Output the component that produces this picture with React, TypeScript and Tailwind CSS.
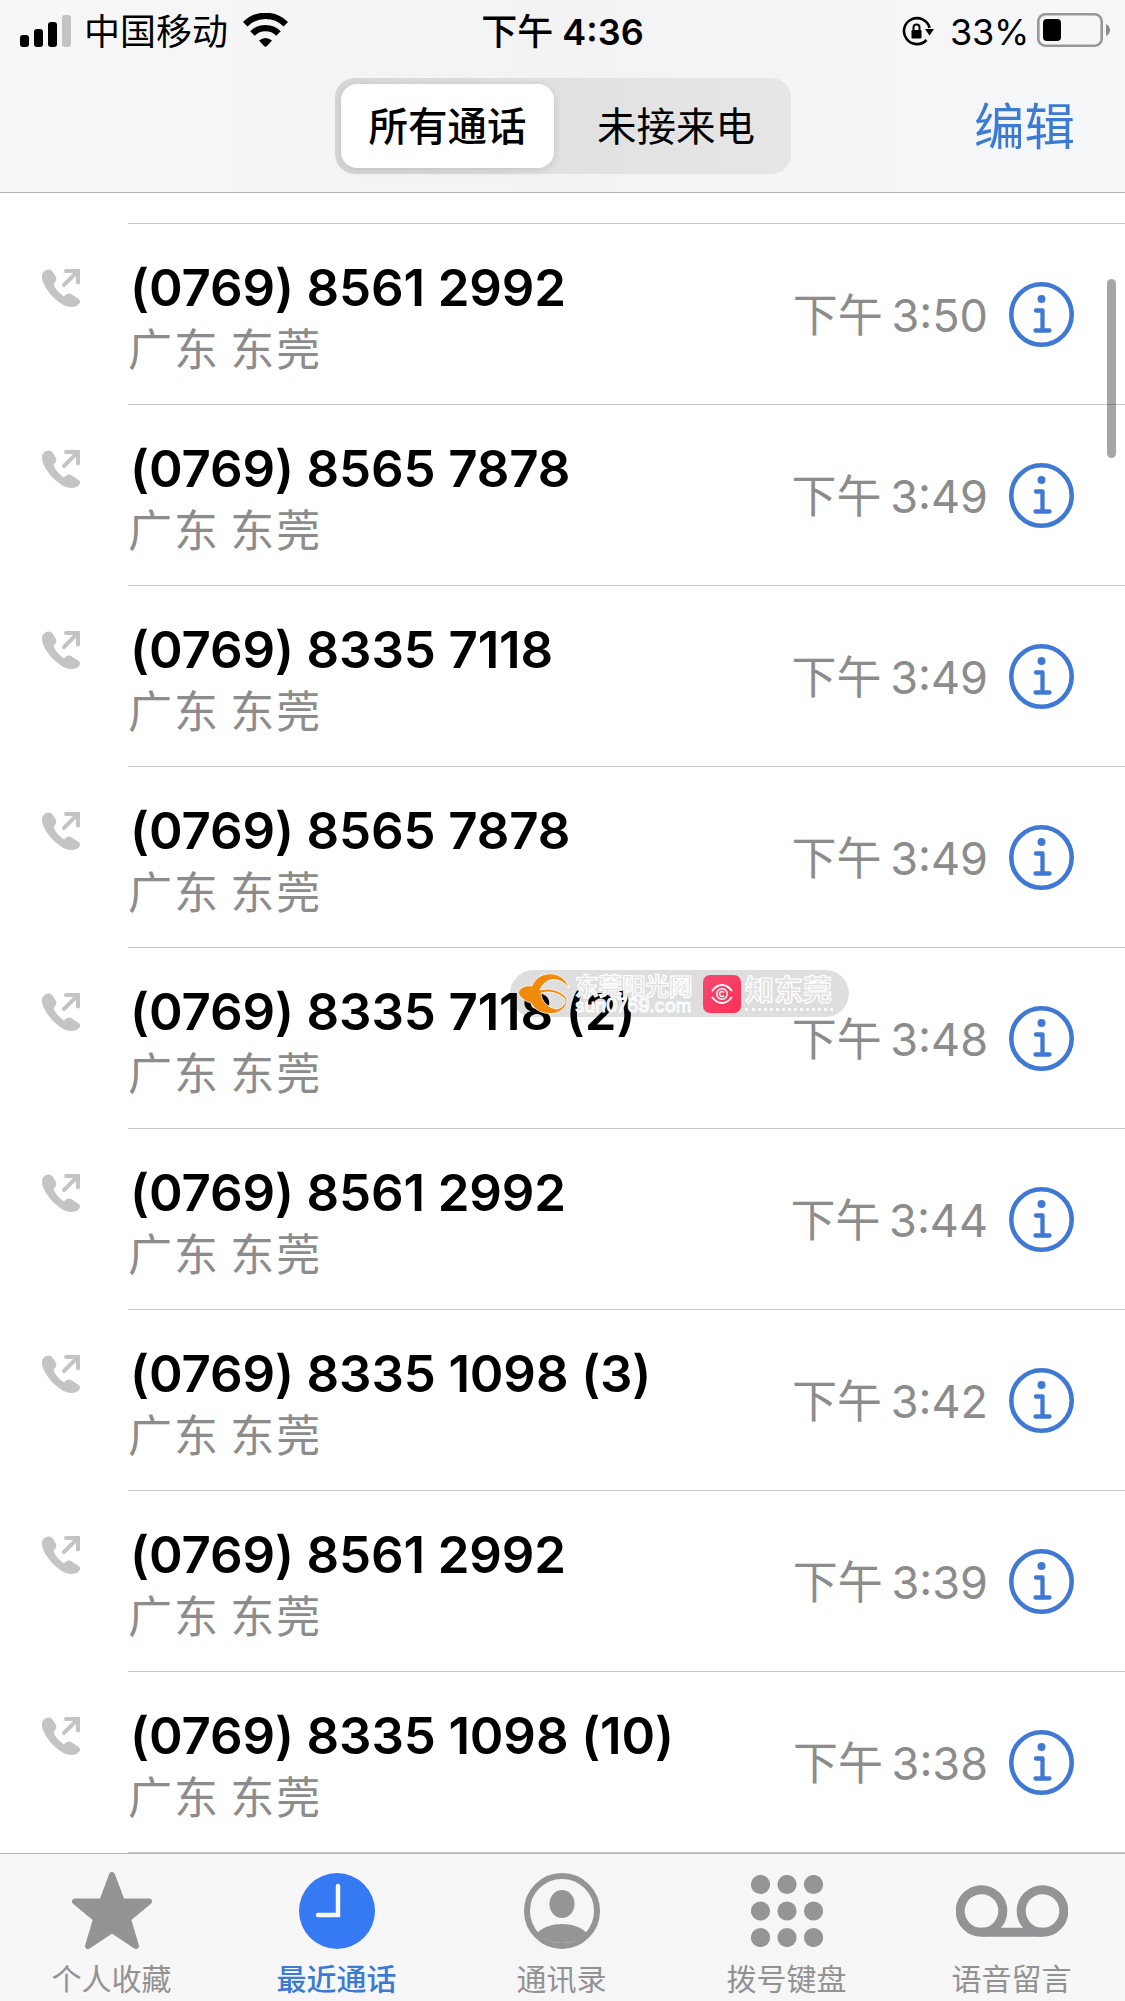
const calls = [
  { number: "(0769) 8561 2992", time: "3:50" },
  { number: "(0769) 8565 7878", time: "3:49" },
  { number: "(0769) 8335 7118", time: "3:49" },
  { number: "(0769) 8565 7878", time: "3:49" },
  { number: "(0769) 8335 7118 (2)", time: "3:48" },
  { number: "(0769) 8561 2992", time: "3:44" },
  { number: "(0769) 8335 1098 (3)", time: "3:42" },
  { number: "(0769) 8561 2992", time: "3:39" },
  { number: "(0769) 8335 1098 (10)", time: "3:38" },
];

function StatusBar() {
  return (
    <div className="grid h-[62px] grid-cols-[1fr_auto_1fr] items-center text-[36px] leading-none text-black">
      <div className="flex items-center pl-5">
        <svg width="51" height="32" viewBox="0 0 51 32">
          <rect x="0" y="20" width="9" height="12" rx="3" />
          <rect x="14" y="14" width="9" height="18" rx="3" />
          <rect x="28" y="7" width="9" height="25" rx="3" />
          <rect x="42" y="0" width="9" height="32" rx="3" fill="#c4c4c4" />
        </svg>
        <span className="ml-[13px] pt-[1px]">中国移动</span>
        <svg className="-mt-[3px] ml-[15px]" width="45" height="34" viewBox="0 0 45 34">
          <g fill="none" stroke="#000" strokeWidth="6.4">
            <path d="M2.2 11.2A29 29 0 0 1 42.8 11.2" />
            <path d="M9.5 20.5A18.5 18.5 0 0 1 35.5 20.5" />
          </g>
          <path d="M16 27.500Q22.500 22.500 29 27.500L24 33Q22.500 34.500 21 33Z" />
        </svg>
      </div>
      <span className="pt-[2px] font-semibold">
        <span className="font-medium">下午</span> 4:36
      </span>
      <div className="flex items-center justify-end pr-[14px]">
        <svg className="mr-[16px]" width="32" height="32" viewBox="0 0 32 32">
          <path d="M24.500 25A13 13 0 1 1 27.600 13" fill="none" stroke="#000" strokeWidth="2.600" />
          <path d="M23 14H32L27.500 20.500Z" />
          <rect x="9.500" y="15" width="10" height="8.500" rx="1.200" />
          <path d="M11.500 15V12.500a3 3 0 0 1 6 0V15" fill="none" stroke="#000" strokeWidth="2" />
        </svg>
        <span className="pt-[1px] tracking-[-0.300px]">33%</span>
        <svg className="-mt-[2px] ml-2" width="74" height="34" viewBox="0 0 74 34">
          <rect x="1.300" y="1.300" width="63.400" height="31.400" rx="7" fill="none" stroke="#979797" strokeWidth="2.600" />
          <rect x="6" y="6" width="18" height="22" rx="4" />
          <path d="M69 11Q73 13 73 17T69 23Z" fill="#8c8c8c" />
        </svg>
      </div>
    </div>
  );
}

function Header() {
  return (
    <header className="h-[193px] border-b border-[#b0b0b0] bg-linear-to-r from-[#f7f7f7] via-[#f3f3f3] to-[#f6f7f9]">
      <StatusBar />
      <div className="mt-4 grid grid-cols-[1fr_456px_1fr] items-center pl-[1px] text-[39.500px]">
        <div />
        <div className="flex h-24 rounded-[20px] bg-linear-to-r from-[#d8d8d8] via-[#e1e1e1] to-[#e6e6e6] p-[6px]">
          <div className="flex w-[213px] items-center justify-center rounded-[16px] bg-white pt-[3px] font-medium shadow-[0_2px_10px_rgba(0,0,0,0.12)]">所有通话</div>
          <div className="flex flex-1 items-center justify-center pt-[3px] pl-[13px]">未接来电</div>
        </div>
        <div className="pt-[2px] pr-[50px] text-right text-[50.500px] leading-none text-[#3d7bd3]">编辑</div>
      </div>
    </header>
  );
}

function OutgoingIcon() {
  return (
    <svg width="40" height="40" viewBox="0 0 40 40">
      <path d="M2.500 4C5 1 9 0.500 11.500 3.500L15 9C16 12 14.500 14 12.500 16C14 21 18 25 23 28.500C25 26 28 24.500 30 26L37 30.500C40 32.500 39.500 35 37 37C32 40.500 25 39 20 35.500C12 30 5 22 2 14C0.500 10 0.500 6 2.500 4Z" fill="#c4c4c4" />
      <path d="M25 3H37V14.500M36 4L23 17" fill="none" stroke="#c4c4c4" strokeWidth="4" strokeLinecap="round" strokeLinejoin="miter" />
    </svg>
  );
}

function InfoIcon() {
  return (
    <svg width="65" height="65" viewBox="0 0 65 65">
      <circle cx="32.500" cy="32.500" r="30.200" fill="none" stroke="#3f79d4" strokeWidth="4.600" />
      <circle cx="32.500" cy="17" r="4" fill="#3f79d4" />
      <path d="M27 28.500H33.500V48M26.500 48.500H40.500" fill="none" stroke="#3f79d4" strokeWidth="4.300" strokeLinecap="round" strokeLinejoin="round" />
    </svg>
  );
}

function CallRow({ number, time }: { number: string; time: string }) {
  return (
    <li className="flex h-[181px]">
      <div className="w-32 pt-[44px] pl-[41px]">
        <OutgoingIcon />
      </div>
      <div className="flex flex-1 border-b border-[#c6c6c6]">
        <div className="flex-1 pt-[34px] pl-[2px]">
          <div className="text-[51px] leading-[60px] font-semibold tracking-[-0.120px] whitespace-nowrap text-black">{number}</div>
          <div className="-ml-[2px] pt-[1px] text-[44px] leading-[62px] tracking-[2px] text-[#8c8c8c] [word-spacing:-4px]">广东 东莞</div>
        </div>
        <div className="flex items-center gap-[21px] pr-[51px] text-[45px] leading-none text-[#8c8c8c]">
          <span className="pt-[2px] [word-spacing:-4px]">下午 {time}</span>
          <InfoIcon />
        </div>
      </div>
    </li>
  );
}

function Watermark() {
  return (
    <div className="absolute top-[970px] left-[510px] flex h-[47px] w-[339px] items-center rounded-full bg-black/13 text-[#e2e2e2]">
      <svg className="ml-[7px]" width="54" height="42" viewBox="0 0 54 42">
        <path d="M1 20C3 14 9 12 15 13C19 3 28 0 36 1C44 2 50 8 52 15C46 7 36 4 29 9C26 11 24 14 23 17C31 15 41 16 49 24C52 31 47 37 39 40C29 42 19 39 14 30C10 29 4 26 1 20ZM24 20C24 28 31 35 40 36C47 34 50 29 47 25C40 19 31 18 24 20Z" fill="#f08a0c" fillRule="evenodd" stroke="#fff" strokeWidth="0.800" />
      </svg>
      <div className="ml-1 w-[119px]">
        <div className="text-[23.500px] leading-[24px] font-bold [-webkit-text-stroke:1.2px_white]">东莞阳光网</div>
        <div className="text-[18px] leading-[14px] tracking-[0.100px] [-webkit-text-stroke:1px_white]">sun0769.com</div>
      </div>
      <svg className="ml-[9px]" width="38" height="38" viewBox="0 0 38 38">
        <defs>
          <linearGradient id="badge" x1="0" y1="0" x2="1" y2="1">
            <stop offset="0" stopColor="#f54a70" />
            <stop offset="1" stopColor="#fb2f58" />
          </linearGradient>
        </defs>
        <rect width="38" height="38" rx="7" fill="url(#badge)" />
        <g fill="none" stroke="#fff" strokeWidth="1.800">
          <path d="M9 16C15 8 23 8 29 16M9 22C15 30 23 30 29 22" />
          <circle cx="19" cy="19" r="5.300" strokeWidth="1.500" />
          <path d="M21 17.500A2.500 2.500 0 1 0 21 20.500" strokeWidth="1.500" />
        </g>
      </svg>
      <div className="ml-[4px]">
        <div className="text-[29px] leading-[30px] font-bold [-webkit-text-stroke:1.2px_white]">知东莞</div>
        <div className="mt-[2px] h-[3px] w-[88px] border-t-[3px] border-dotted border-white/80" />
      </div>
    </div>
  );
}

const icons = {
  star: (
    <svg width="82" height="78" viewBox="0 0 82 78">
      <path d="M41 3L51 29.500H78L57 47L65 74L41 58L17 74L25 47L4 29.500H31Z" fill="#959393" stroke="#959393" strokeWidth="6" strokeLinejoin="round" />
    </svg>
  ),
  clock: (
    <svg width="76" height="76" viewBox="0 0 76 76">
      <circle cx="38" cy="38" r="38" fill="#357af2" />
      <path d="M39 13V42H19" fill="none" stroke="#f5f8ff" strokeWidth="4.500" strokeLinecap="round" />
    </svg>
  ),
  person: (
    <svg width="76" height="76" viewBox="0 0 76 76">
      <circle cx="38" cy="38" r="35" fill="none" stroke="#959595" strokeWidth="6" />
      <ellipse cx="38" cy="31" rx="12.500" ry="14" fill="#959595" />
      <path d="M13 60C25 48 51 48 63 60A36 36 0 0 1 13 60Z" fill="#959595" />
    </svg>
  ),
  keypad: (
    <svg width="72" height="72" viewBox="0 0 72 72" fill="#959595">
      {[9.5, 36, 62.5].map((y) => [9.5, 36, 62.5].map((x) => <circle key={x + "-" + y} cx={x} cy={y} r="9.600" />))}
    </svg>
  ),
  voicemail: (
    <svg width="112" height="52" viewBox="0 0 112 52" fill="none" stroke="#929495" strokeWidth="9">
      <circle cx="25.500" cy="26" r="21.300" />
      <circle cx="86.500" cy="26" r="21.300" />
      <path d="M25.500 47.300H86.500" />
    </svg>
  ),
};

const tabs = [
  { label: "个人收藏", icon: icons.star },
  { label: "最近通话", icon: icons.clock, active: true },
  { label: "通讯录", icon: icons.person },
  { label: "拨号键盘", icon: icons.keypad },
  { label: "语音留言", icon: icons.voicemail },
];

export default function App() {
  return (
    <div className="relative flex h-[2001px] w-[1125px] flex-col overflow-hidden bg-white font-['Inter','Noto_Sans_CJK_SC',sans-serif]">
      <Header />
      <main>
        <div className="ml-32 h-[31px] border-b border-[#c6c6c6]" />
        <ul>
          {calls.map((call, i) => (
            <CallRow key={i} {...call} />
          ))}
        </ul>
      </main>
      <nav className="grid flex-1 grid-cols-5 border-t border-[#b5b5b5] bg-linear-to-r from-[#f8f7f7] via-[#f6f6f6] to-[#f6f7f8]">
        {tabs.map((tab) => (
          <div key={tab.label} className="flex flex-col items-center pr-[2px]">
            <div className="mt-[15px] flex h-[84px] items-center">{tab.icon}</div>
            <div className={tab.active ? "mt-[4px] text-[30px] leading-[44px] font-medium text-[#3d7bd3]" : "mt-[4px] text-[30px] leading-[44px] text-[#929292]"}>
              {tab.label}
            </div>
          </div>
        ))}
      </nav>
      <div className="absolute top-[279px] left-[1107px] h-[179px] w-[9px] rounded-full bg-black/35" />
      <Watermark />
    </div>
  );
}
